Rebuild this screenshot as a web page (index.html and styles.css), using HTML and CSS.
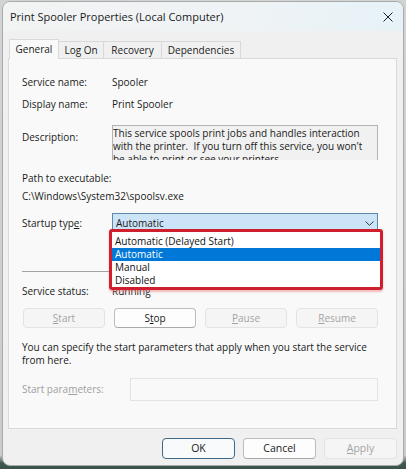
FILE: index.html
```html
<!DOCTYPE html>
<html lang="en">
<head>
<meta charset="utf-8">
<title>Print Spooler Properties</title>
<link rel="stylesheet" href="styles.css">
</head>
<body>
<div class="window">
  <div class="titlebar">
    <span class="title">Print Spooler Properties (Local Computer)</span>
    <svg class="close" width="10" height="10" viewBox="0 0 10 10"><path d="M0.5 0.5L9.5 9.5M9.5 0.5L0.5 9.5" stroke="#1f1f1f" stroke-width="1" fill="none"/></svg>
  </div>
  <div class="tabs">
    <div class="tab active t-general">General</div>
    <div class="tab t-logon">Log On</div>
    <div class="tab t-recovery">Recovery</div>
    <div class="tab t-deps">Dependencies</div>
  </div>
  <div class="panel">
    <div class="row"><span class="label">Service name:</span><span>Spooler</span></div>
    <div class="row r-display"><span class="label">Display name:</span><span>Print Spooler</span></div>
    <div class="row r-desc"><span class="label desc-label">Description:</span>
      <div class="descbox">This service spools print jobs and handles interaction<br>with the printer.&nbsp; If you turn off this service, you won't<br>be able to print or see your printers.</div>
    </div>
    <div class="path-label">Path to executable:</div>
    <div class="path">C:\Windows\System32\spoolsv.exe</div>
    <div class="row r-startup"><span class="label">Startup typ<u>e</u>:</span>
      <div class="combo-wrap">
        <div class="combo"><span>Automatic</span><svg width="9" height="5" viewBox="0 0 9 5"><path d="M0.5 0.5L4.5 4.3L8.5 0.5" stroke="#3a3a3a" stroke-width="1" fill="none"/></svg></div>
        <div class="dropdown">
          <div class="opt">Automatic (Delayed Start)</div>
          <div class="opt sel">Automatic</div>
          <div class="opt">Manual</div>
          <div class="opt">Disabled</div>
        </div>
        <div class="highlight"></div>
      </div>
    </div>
    <div class="sep"></div>
    <div class="row r-status"><span class="label">Service status:</span><span>Running</span></div>
    <div class="svc-buttons">
      <div class="btn disabled"><u>S</u>tart</div>
      <div class="btn">S<u>t</u>op</div>
      <div class="btn disabled"><u>P</u>ause</div>
      <div class="btn disabled"><u>R</u>esume</div>
    </div>
    <p class="hint">You can specify the start parameters that apply when you start the service<br>from here.</p>
    <div class="row r-params"><span class="label disabled-text">Start para<u>m</u>eters:</span><div class="param-input"></div></div>
  </div>
  <div class="footer">
    <div class="btn fbtn default">OK</div>
    <div class="btn fbtn">Cancel</div>
    <div class="btn fbtn disabled"><u>A</u>pply</div>
  </div>
</div>
</body>
</html>
```
FILE: styles.css
```css
html, body {
  margin: 0;
  padding: 0;
}
body {
  width: 406px;
  height: 469px;
  overflow: hidden;
  background: linear-gradient(to bottom, #d2d4d4 0, #c9cccc 455px, #40594f 463px, #3a5249 469px);
  font-family: "Open Sans", "Noto Sans", sans-serif;
  font-size: 10px;
  color: #1a1a1a;
}
.window {
  box-sizing: border-box;
  margin: 1px 0 0 2px;
  width: 402px;
  height: 465px;
  border: 1px solid #a9abab;
  border-radius: 8px;
  background: #f0f0f0;
  overflow: hidden;
  display: flex;
  flex-direction: column;
}
.titlebar {
  height: 29px;
  flex: none;
  display: flex;
  align-items: center;
  justify-content: space-between;
  padding: 0 10px 0 7px;
  background: linear-gradient(90deg, #f2f3f3 0%, #eff3f5 60%, #e6f2f7 100%);
}
.title {
  font-size: 11px;
  line-height: 16px;
  color: #1a1a1a;
}
.close {
  display: block;
}
.tabs {
  flex: none;
  display: flex;
  align-items: flex-end;
  height: 19px;
  margin-top: 8px;
  padding-left: 6px;
}
.tab {
  box-sizing: border-box;
  height: 17px;
  line-height: 16px;
  text-align: center;
  border: 1px solid #d9d9d9;
  border-left: none;
  border-bottom: none;
  background: #f0f0f0;
}
.tab.active {
  height: 20px;
  line-height: 18px;
  margin-bottom: -1px;
  border-left: 1px solid #d9d9d9;
  background: #f9f9f9;
  position: relative;
  z-index: 1;
}
.t-general { width: 50px; }
.t-logon { width: 45px; }
.t-recovery { width: 58px; }
.t-deps { width: 79px; }
.panel {
  box-sizing: border-box;
  flex: none;
  height: 371px;
  margin: 0 6px 0 5px;
  border: 1px solid #d9d9d9;
  background: #f9f9f9;
  padding: 15px 18px 0 13px;
}
.row {
  display: grid;
  grid-template-columns: 90px 1fr;
  line-height: 16px;
}
.r-display { margin-top: 6px; }
.r-desc { margin-top: 13px; }
.desc-label { padding-top: 4px; }
.descbox {
  box-sizing: border-box;
  height: 35px;
  border: 1px solid #b4b4b4;
  border-bottom: none;
  background: #f1f1f1;
  padding: 1px 0 0 0;
  overflow: hidden;
  white-space: nowrap;
  line-height: 13px;
}
.path-label {
  margin-top: 10px;
  line-height: 16px;
}
.path {
  margin-top: 2px;
  line-height: 16px;
}
.r-startup {
  margin-top: 9px;
  line-height: 20px;
}
.combo-wrap {
  position: relative;
}
.combo {
  box-sizing: border-box;
  height: 20px;
  border: 1px solid #5f88af;
  background: #cce4f7;
  padding: 0 3px 0 3px;
  display: flex;
  align-items: center;
  justify-content: space-between;
  line-height: 18px;
}
.combo svg {
  display: block;
}
.dropdown {
  position: absolute;
  left: 0;
  top: 19px;
  width: 268px;
  padding-top: 3px;
  background: #ffffff;
  z-index: 2;
}
.opt {
  line-height: 13px;
  padding-left: 3px;
  color: #111;
}
.opt.sel {
  background: #0078d7;
  color: #ffffff;
}
.highlight {
  position: absolute;
  left: -3px;
  top: 16px;
  width: 274px;
  height: 61px;
  box-sizing: border-box;
  border: 3px solid #cf1f2e;
  border-radius: 3px;
  box-shadow: 0 2px 2px rgba(235, 110, 110, 0.45);
  z-index: 3;
}
.sep {
  margin-top: 38px;
  height: 1px;
  background: #a3a3a3;
}
.r-status { margin-top: 11px; }
.svc-buttons {
  display: grid;
  grid-template-columns: repeat(4, 1fr);
  gap: 9px;
  margin-top: 9px;
  padding-left: 1px;
}
.btn {
  box-sizing: border-box;
  height: 20px;
  line-height: 18px;
  text-align: center;
  border: 1px solid #bdbdbd;
  border-bottom-color: #a9a9a9;
  border-radius: 4px;
  background: #fdfdfd;
  color: #1a1a1a;
}
.btn.disabled {
  color: #a4a4a4;
  border-color: #e3e3e3;
  background: #f5f5f5;
}
.hint {
  margin: 13px 0 0;
  line-height: 13px;
}
.r-params {
  margin-top: 11px;
  grid-template-columns: 108px 1fr;
  line-height: 23px;
}
.disabled-text {
  color: #a0a0a0;
}
.param-input {
  box-sizing: border-box;
  height: 23px;
  border: 1px solid #e4e4e4;
  background: #f9f9f9;
}
.footer {
  flex: none;
  display: flex;
  justify-content: flex-end;
  gap: 8px;
  padding: 9px 6px 0 0;
}
.fbtn {
  width: 73px;
  height: 21px;
  line-height: 19px;
  font-size: 10.5px;
}
.fbtn.default {
  border: 1px solid #3f6a87;
  background: #f8fafb;
}
u {
  text-decoration-thickness: 1px;
  text-underline-offset: 1px;
}
```
